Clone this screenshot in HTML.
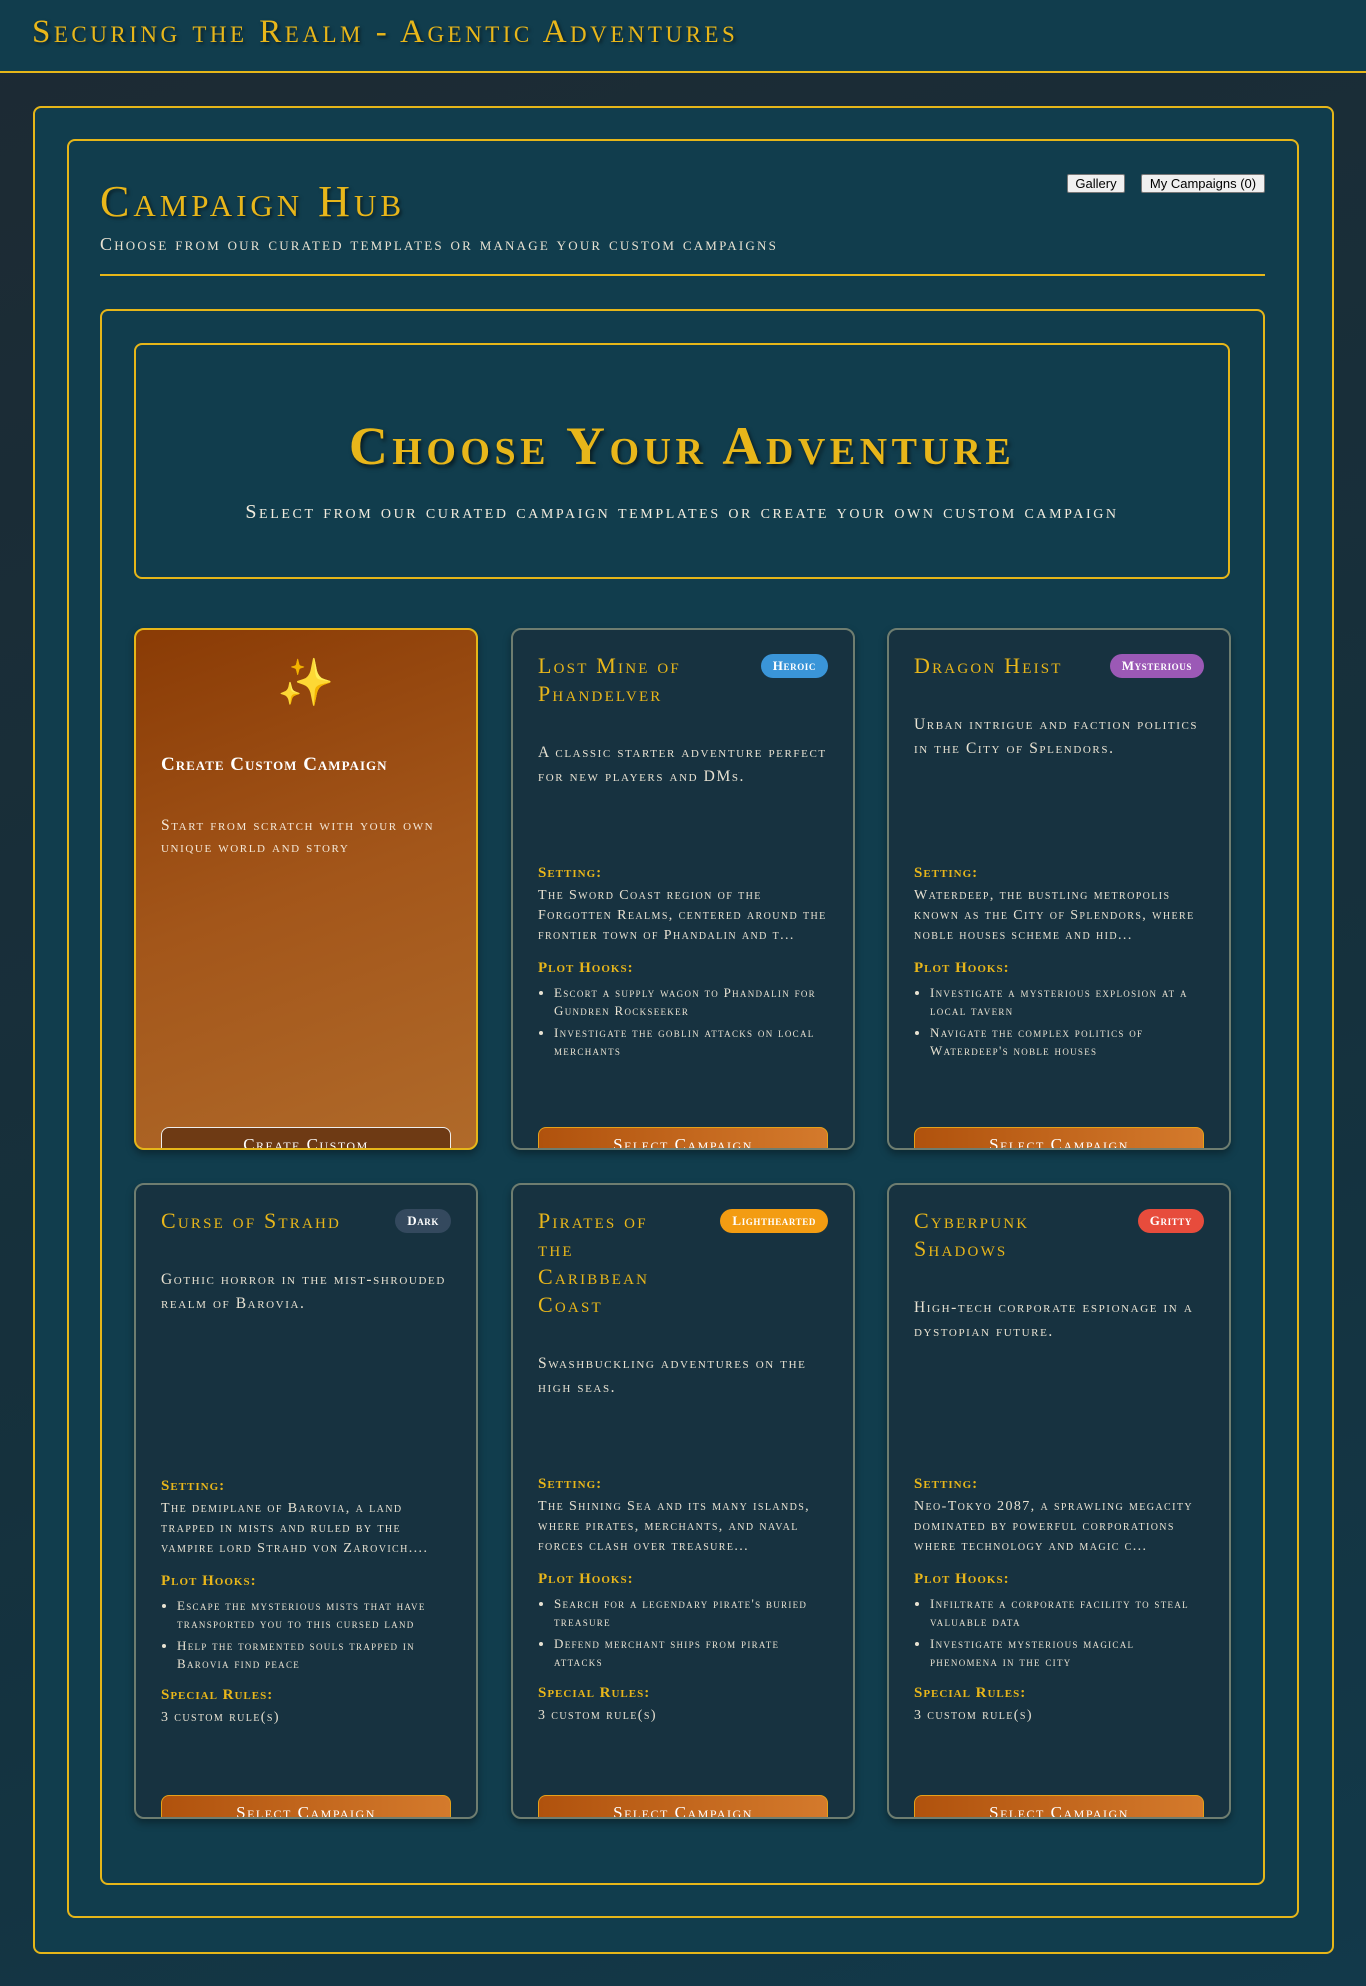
<!DOCTYPE html>
<html><head><meta charset="utf-8"><style>
*{box-sizing:border-box;margin:0;padding:0}
body{width:1366px;height:1986px;background:linear-gradient(160deg,#1d2a33,#15313d 60%,#12394a);font-family:"Liberation Serif",serif;font-variant:small-caps;color:#e8e2d2;overflow:hidden;position:relative}
.hdr{position:absolute;left:0;top:0;width:1366px;height:73px;background:#113d4d;border-bottom:2px solid #e6b619}
.hdr h1{position:absolute;left:32px;top:14px;font-size:33px;color:#e8b61a;font-weight:normal;text-shadow:2px 2px 3px rgba(0,0,0,.5);letter-spacing:3.5px;white-space:nowrap}
.box{position:absolute;border:2px solid #e6b619;border-radius:8px;background:#113d4d}
.hub{position:absolute;left:100px;top:176px;font-size:44px;color:#e8b61a;text-shadow:2px 2px 3px rgba(0,0,0,.5);font-weight:normal;letter-spacing:4px}
.sub{position:absolute;left:100px;top:234px;font-size:18px;color:#e8e2d2;letter-spacing:2.2px;white-space:nowrap}
.btn{position:absolute;top:174px;height:19px;background:#f0f0f0;border:1px solid #777;border-radius:2px;color:#000;font-family:"Liberation Sans",sans-serif;font-variant:normal;font-size:13px;line-height:17px;text-align:center}
.hr{position:absolute;left:100px;top:274px;width:1165px;height:2px;background:#e6b619}
.hero h2{position:absolute;left:0;right:0;top:415px;text-align:center;font-size:54px;color:#e8b61a;font-weight:bold;text-shadow:2px 3px 4px rgba(0,0,0,.6);letter-spacing:4.5px;padding-left:134px;padding-right:136px}
.hero p{position:absolute;left:134px;width:1096px;top:501px;text-align:center;font-size:20px;color:#f2ecde;letter-spacing:2.6px;white-space:nowrap}
.card{position:absolute;width:344px;border:2px solid #6e7d70;border-radius:10px;background:#173240;overflow:hidden;box-shadow:0 4px 8px rgba(0,0,0,.35);padding:0 25px}
.card .t{position:absolute;left:25px;top:22px;width:200px;font-size:22px;line-height:28px;color:#e8b61a;letter-spacing:2.2px}
.badge{position:absolute;right:25px;top:24px;height:24px;border-radius:12px;padding:0 12px;font-size:13px;line-height:24px;color:#fff;font-weight:bold;letter-spacing:.6px}
.card .d{position:absolute;left:25px;right:25px;font-size:15.5px;line-height:24px;color:#e8e2d2;letter-spacing:1.6px}
.det{position:absolute;left:25px;right:25px;font-size:14px;letter-spacing:1.4px}
.det .l{color:#e8b61a;font-size:15px;line-height:20px;font-weight:bold;letter-spacing:1px}
.det .v{line-height:20px;margin-bottom:12px;margin-top:3px}
.det ul{margin:6px 0 12px 16px;font-size:13px;line-height:18px;letter-spacing:1.3px}
.det li{margin-bottom:4px}
.sel{position:absolute;left:25px;right:25px;height:50px;border:1px solid #e6a019;border-radius:8px;background:linear-gradient(90deg,#b0520d,#d47a2c);color:#fff;text-align:center;font-size:17px;line-height:34px;letter-spacing:1.5px}
</style></head><body>
<div class="hdr"><h1>Securing the Realm - Agentic Adventures</h1></div>
<div class="box" style="left:33px;top:106px;width:1301px;height:1848px"></div>
<div class="box" style="left:67px;top:139px;width:1232px;height:1779px"></div>
<div class="hub">Campaign Hub</div>
<div class="sub">Choose from our curated templates or manage your custom campaigns</div>
<div class="btn" style="left:1067px;width:58px">Gallery</div>
<div class="btn" style="left:1141px;width:124px">My Campaigns (0)</div>
<div class="hr"></div>
<div class="box" style="left:100px;top:309px;width:1165px;height:1576px"></div>
<div class="box" style="left:134px;top:343px;width:1096px;height:236px;background:#113d4d"></div>
<div class="hero"><h2>Choose Your Adventure</h2><p>Select from our curated campaign templates or create your own custom campaign</p></div>

<div class="card" style="left:134px;top:628px;height:522px;border-color:#e6b619;background:linear-gradient(160deg,#8a3b05,#a3561a 50%,#b06a2a)">
<div style="position:absolute;left:0;right:0;top:26px;text-align:center;font-size:46px;color:#f5c518;font-variant:normal">✨</div>
<div style="position:absolute;left:25px;top:124px;font-size:19px;font-weight:bold;color:#fff;letter-spacing:1px">Create Custom Campaign</div>
<div class="d" style="top:185px;line-height:22px;color:#f4e8d8">Start from scratch with your own unique world and story</div>
<div class="sel" style="top:497px;background:#6e3a14;border-color:#eee">Create Custom</div>
</div>

<div class="card" style="left:511px;top:628px;height:522px">
<div class="t">Lost Mine of Phandelver</div><div class="badge" style="background:#3a95d8">Heroic</div>
<div class="d" style="top:111px">A classic starter adventure perfect for new players and DMs.</div>
<div class="det" style="top:233px"><div class="l">Setting:</div><div class="v">The Sword Coast region of the Forgotten Realms, centered around the frontier town of Phandalin and t...</div><div class="l">Plot Hooks:</div><ul><li>Escort a supply wagon to Phandalin for Gundren Rockseeker</li><li>Investigate the goblin attacks on local merchants</li></ul></div>
<div class="sel" style="top:497px">Select Campaign</div>
</div>

<div class="card" style="left:887px;top:628px;height:522px">
<div class="t">Dragon Heist</div><div class="badge" style="background:#9b59b6">Mysterious</div>
<div class="d" style="top:83px">Urban intrigue and faction politics in the City of Splendors.</div>
<div class="det" style="top:233px"><div class="l">Setting:</div><div class="v">Waterdeep, the bustling metropolis known as the City of Splendors, where noble houses scheme and hid...</div><div class="l">Plot Hooks:</div><ul><li>Investigate a mysterious explosion at a local tavern</li><li>Navigate the complex politics of Waterdeep's noble houses</li></ul></div>
<div class="sel" style="top:497px">Select Campaign</div>
</div>

<div class="card" style="left:134px;top:1183px;height:636px">
<div class="t">Curse of Strahd</div><div class="badge" style="background:#34495e">Dark</div>
<div class="d" style="top:83px">Gothic horror in the mist-shrouded realm of Barovia.</div>
<div class="det" style="top:291px"><div class="l">Setting:</div><div class="v">The demiplane of Barovia, a land trapped in mists and ruled by the vampire lord Strahd von Zarovich....</div><div class="l">Plot Hooks:</div><ul><li>Escape the mysterious mists that have transported you to this cursed land</li><li>Help the tormented souls trapped in Barovia find peace</li></ul><div class="l">Special Rules:</div><div class="v">3 custom rule(s)</div></div>
<div class="sel" style="top:610px">Select Campaign</div>
</div>

<div class="card" style="left:511px;top:1183px;height:636px">
<div class="t" style="width:150px">Pirates of the Caribbean Coast</div><div class="badge" style="background:#f39c12">Lighthearted</div>
<div class="d" style="top:167px">Swashbuckling adventures on the high seas.</div>
<div class="det" style="top:289px"><div class="l">Setting:</div><div class="v">The Shining Sea and its many islands, where pirates, merchants, and naval forces clash over treasure...</div><div class="l">Plot Hooks:</div><ul><li>Search for a legendary pirate's buried treasure</li><li>Defend merchant ships from pirate attacks</li></ul><div class="l">Special Rules:</div><div class="v">3 custom rule(s)</div></div>
<div class="sel" style="top:610px">Select Campaign</div>
</div>

<div class="card" style="left:887px;top:1183px;height:636px">
<div class="t" style="width:170px">Cyberpunk Shadows</div><div class="badge" style="background:#e74c3c">Gritty</div>
<div class="d" style="top:111px">High-tech corporate espionage in a dystopian future.</div>
<div class="det" style="top:289px"><div class="l">Setting:</div><div class="v">Neo-Tokyo 2087, a sprawling megacity dominated by powerful corporations where technology and magic c...</div><div class="l">Plot Hooks:</div><ul><li>Infiltrate a corporate facility to steal valuable data</li><li>Investigate mysterious magical phenomena in the city</li></ul><div class="l">Special Rules:</div><div class="v">3 custom rule(s)</div></div>
<div class="sel" style="top:610px">Select Campaign</div>
</div>
</body></html>
